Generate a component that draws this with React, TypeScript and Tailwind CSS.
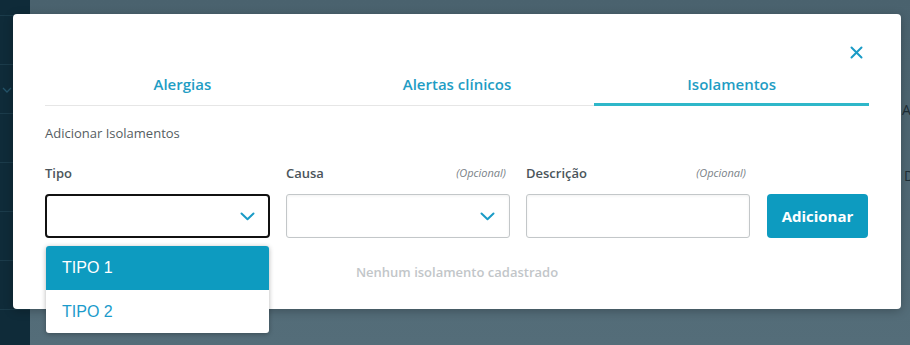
import * as React from "react";

const font = { fontFamily: "'Open Sans', Lato, sans-serif" };

const tabs = [
  { label: "Alergias", active: false },
  { label: "Alertas clínicos", active: false },
  { label: "Isolamentos", active: true },
];

function Chevron() {
  return (
    <svg width="15" height="9" viewBox="0 0 15 9" fill="none">
      <path d="M1.5 1.5 L7.5 7.2 L13.5 1.5" stroke="#1a9bc6" strokeWidth="2" strokeLinecap="round" strokeLinejoin="round" />
    </svg>
  );
}

function Sidebar() {
  return (
    <div className="flex w-[30px] shrink-0 flex-col bg-[#0f2b39] pt-[15px]">
      {[0, 1, 2, 3, 4, 5].map((i) => (
        <div key={i} className="flex h-[49px] items-center border-t border-[#1b3b4a]">
          {i === 1 && (
            <svg width="10" height="6" viewBox="0 0 10 6" className="ml-[2px] mt-[2px]" fill="none">
              <path d="M1 1 L5 5 L9 1" stroke="#24546a" strokeWidth="1.3" />
            </svg>
          )}
        </div>
      ))}
      <div className="border-t border-[#1b3b4a]" />
    </div>
  );
}

export default function App() {
  return (
    <div className="relative flex h-[345px] w-[910px] overflow-hidden" style={font}>
      <Sidebar />
      <div className="flex-1 bg-gradient-to-b from-[#4a626e] to-[#546d79]">
        <div className="ml-auto mt-[100px] w-[8px] text-[14px] leading-[20px] text-[#1d2d35]">A</div>
        <div className="ml-auto mt-[46px] w-[6px] text-[14px] leading-[20px] text-[#1d2d35]">D</div>
      </div>

      {/* Modal */}
      <div className="absolute left-[13px] top-[14px] h-[295px] w-[888px] rounded-[4px] bg-white px-[32px] shadow-[0_2px_10px_rgba(0,0,0,0.25)]">
        <button className="absolute right-[38px] top-[31px] flex h-[14px] w-[14px] items-center justify-center">
          <svg width="13" height="13" viewBox="0 0 13 13" fill="none">
            <path d="M1.5 1.5 L11.5 11.5 M11.5 1.5 L1.5 11.5" stroke="#1a9bc6" strokeWidth="2" strokeLinecap="round" />
          </svg>
        </button>

        {/* Tabs */}
        <div className="flex border-b border-[#e6e6e6] pt-[56px]">
          {tabs.map((t) => (
            <div
              key={t.label}
              className={
                "-mb-px flex h-[36px] flex-1 justify-center border-b-[3px] pt-[5px] text-[15px] font-semibold leading-[18px] text-[#1f9dc4] " +
                (t.active ? "border-[#2eb7c9]" : "border-transparent")
              }
            >
              {t.label}
            </div>
          ))}
        </div>

        <div className="mt-[19px] text-[13px] leading-[16px] text-[#555d62]">Adicionar Isolamentos</div>

        {/* Form */}
        <div className="mt-[24px] grid grid-cols-[225px_224px_224px_102px] gap-x-[16px]">
          <div className="text-[13px] font-semibold leading-[16px] text-[#4b555b]">Tipo</div>
          <div className="flex justify-between pr-[4px] text-[13px] font-semibold leading-[16px] text-[#4b555b]">
            <span>Causa</span>
            <span className="text-[11px] font-normal italic text-[#7a8287]">(Opcional)</span>
          </div>
          <div className="flex justify-between pr-[4px] text-[13px] font-semibold leading-[16px] text-[#4b555b]">
            <span>Descrição</span>
            <span className="text-[11px] font-normal italic text-[#7a8287]">(Opcional)</span>
          </div>
          <div />

          <div className="relative mt-[13px] flex h-[44px] items-center justify-end rounded-[4px] border-2 border-[#111] pr-[13px]">
            <Chevron />
          </div>
          <div className="mt-[13px] flex h-[44px] items-center justify-end rounded-[3px] border border-[#c3c7c9] pr-[14px] shadow-[inset_0_1px_3px_rgba(0,0,0,0.06)]">
            <Chevron />
          </div>
          <div className="mt-[13px] h-[44px] rounded-[3px] border border-[#c3c7c9] shadow-[inset_0_1px_3px_rgba(0,0,0,0.06)]" />
          <button className="ml-[1px] mt-[13px] flex h-[44px] items-center justify-center rounded-[4px] bg-[#0d9bc0] text-[15px] font-bold text-white">
            Adicionar
          </button>
        </div>

        <div className="mt-[26px] text-center text-[13px] font-semibold leading-[16px] text-[#c2c6c9]">
          Nenhum isolamento cadastrado
        </div>
      </div>

      {/* Open dropdown list */}
      <div
        className="absolute left-[46px] top-[246px] w-[223px] overflow-hidden rounded-[3px] bg-white shadow-[0_1px_5px_rgba(0,0,0,0.3)]"
        style={{ fontFamily: "'Liberation Sans', Arial, sans-serif" }}
      >
        <div className="flex h-[44px] items-center bg-[#0d9bc0] pl-[16px] text-[16px] text-white">TIPO 1</div>
        <div className="flex h-[43px] items-center pl-[16px] text-[16px] text-[#1b9bcb]">TIPO 2</div>
      </div>
    </div>
  );
}
